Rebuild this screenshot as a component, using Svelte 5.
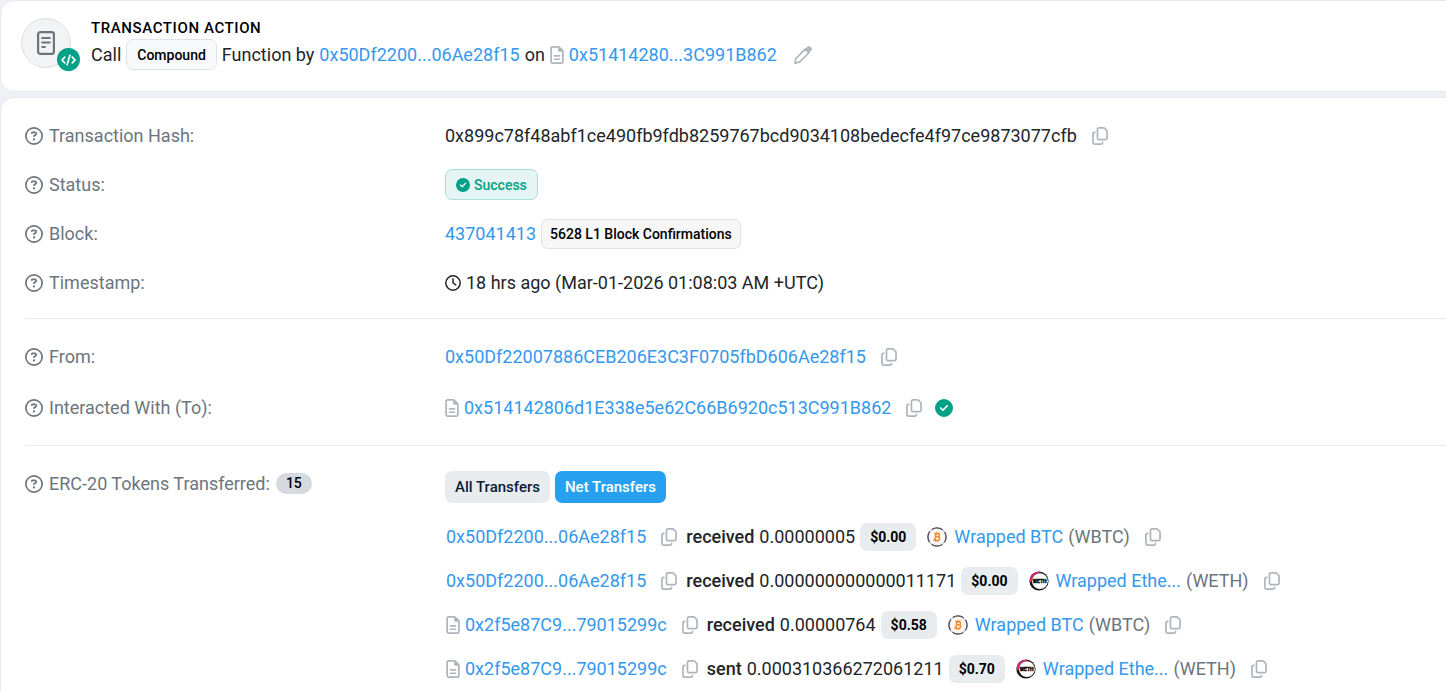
<script>
  const transfers = [
    { contract: false, address: '0x50Df2200...06Ae28f15', action: 'received', amount: '0.00000005', value: '$0.00', token: 'Wrapped BTC', symbol: 'WBTC' },
    { contract: false, address: '0x50Df2200...06Ae28f15', action: 'received', amount: '0.000000000000011171', value: '$0.00', token: 'Wrapped Ethe...', symbol: 'WETH' },
    { contract: true, address: '0x2f5e87C9...79015299c', action: 'received', amount: '0.00000764', value: '$0.58', token: 'Wrapped BTC', symbol: 'WBTC' },
    { contract: true, address: '0x2f5e87C9...79015299c', action: 'sent', amount: '0.000310366272061211', value: '$0.70', token: 'Wrapped Ethe...', symbol: 'WETH' }
  ];
</script>

{#snippet help()}
  <svg class="help" viewBox="0 0 512 512" aria-hidden="true"><path fill="currentColor" d="M464 256A208 208 0 1 0 48 256a208 208 0 1 0 416 0zM0 256a256 256 0 1 1 512 0A256 256 0 1 1 0 256zm169.8-90.7c7.9-22.3 29.1-37.3 52.8-37.3h58.3c34.9 0 63.1 28.3 63.1 63.1c0 22.6-12.1 43.5-31.7 54.8L280 264.4c-.2 13-10.9 23.6-24 23.6c-13.3 0-24-10.7-24-24V250.5c0-8.6 4.6-16.5 12.1-20.8l44.3-25.4c4.7-2.7 7.6-7.7 7.6-13.1c0-8.4-6.8-15.1-15.1-15.1H222.6c-3.4 0-6.4 2.1-7.5 5.3l-.4 1.2c-4.4 12.5-18.2 19-30.6 14.6s-19-18.2-14.6-30.6l.4-1.2zM224 352a32 32 0 1 1 64 0 32 32 0 1 1 -64 0z"/></svg>
{/snippet}

{#snippet file()}
  <svg class="file" viewBox="0 0 384 512" aria-hidden="true"><path fill="currentColor" d="M64 464c-8.8 0-16-7.2-16-16V64c0-8.8 7.2-16 16-16H224v80c0 17.7 14.3 32 32 32h80V448c0 8.8-7.2 16-16 16H64zM64 0C28.7 0 0 28.7 0 64V448c0 35.3 28.7 64 64 64H320c35.3 0 64-28.7 64-64V154.5c0-17-6.7-33.3-18.7-45.3L274.7 18.7C262.7 6.7 246.5 0 229.5 0H64zm56 256c-13.3 0-24 10.7-24 24s10.7 24 24 24H264c13.3 0 24-10.7 24-24s-10.7-24-24-24H120zm0 96c-13.3 0-24 10.7-24 24s10.7 24 24 24H264c13.3 0 24-10.7 24-24s-10.7-24-24-24H120z"/></svg>
{/snippet}

{#snippet copy()}
  <button class="icon-button" type="button" aria-label="Copy">
    <svg class="copy" viewBox="0 0 448 512" aria-hidden="true"><path fill="currentColor" d="M384 336H192c-8.8 0-16-7.2-16-16V64c0-8.8 7.2-16 16-16l140.1 0L400 115.9V320c0 8.8-7.2 16-16 16zM192 384H384c35.3 0 64-28.7 64-64V115.9c0-12.7-5.1-24.9-14.1-33.9L366.1 14.1c-9-9-21.2-14.1-33.9-14.1H192c-35.3 0-64 28.7-64 64V320c0 35.3 28.7 64 64 64zM64 128c-35.3 0-64 28.7-64 64V448c0 35.3 28.7 64 64 64H256c35.3 0 64-28.7 64-64V416H272v32c0 8.8-7.2 16-16 16H64c-8.8 0-16-7.2-16-16V192c0-8.8 7.2-16 16-16H96V128H64z"/></svg>
  </button>
{/snippet}

{#snippet check()}
  <svg class="check" viewBox="0 0 512 512" aria-hidden="true"><path fill="currentColor" d="M256 512A256 256 0 1 0 256 0a256 256 0 1 0 0 512zM369 209L241 337c-9.4 9.4-24.6 9.4-33.9 0l-64-64c-9.4-9.4-9.4-24.6 0-33.9s24.6-9.4 33.9 0l47 47L335 175c9.4-9.4 24.6-9.4 33.9 0s9.4 24.6 0 33.9z"/></svg>
{/snippet}

{#snippet coin(symbol)}
  {#if symbol === 'WBTC'}
    <svg class="coin" viewBox="0 0 20 20" aria-hidden="true">
      <circle cx="10" cy="10" r="9.1" fill="#fff" stroke="#aaa6ae" stroke-width="1"/>
      <circle cx="10" cy="10" r="9.1" fill="none" stroke="#544e5a" stroke-width="1.3" stroke-dasharray="11.3 3" stroke-dashoffset="5.6"/>
      <circle cx="10" cy="10" r="7.4" fill="none" stroke="#e4e3e6" stroke-width=".7"/>
      <g transform="rotate(8 10 10)" fill="none" stroke="#f4913c" stroke-width="1.7">
        <path d="M6.6 6.7h4.1c2 0 2 3.1 0 3.1H8.6M8.4 6.7v6.6M6.6 13.3h4.5c2.3 0 2.3-3.5 0-3.5"/>
        <path stroke-width="1.2" d="M9.2 4.8v1.6M11.2 4.8v1.6M9.2 13.6v1.6M11.2 13.6v1.6"/>
      </g>
    </svg>
  {:else}
    <svg class="coin" viewBox="0 0 20 20" aria-hidden="true">
      <circle cx="10" cy="10" r="9.6" fill="#151315"/>
      <path fill="#ec1c79" d="M.9 11A9.1 9.1 0 0 1 13 1.3C7 2 3 5 2.7 11z"/>
      <circle cx="10.9" cy="10.2" r="7.9" fill="#fff"/>
      <text x="10.7" y="11.9" text-anchor="middle" font-size="5" font-weight="900" font-family="Roboto, sans-serif" fill="#111" stroke="#111" stroke-width=".4">WETH</text>
    </svg>
  {/if}
{/snippet}

<main>
  <section class="card action">
    <div class="avatar">
      <svg class="memo" viewBox="0 0 18 24" aria-hidden="true">
        <rect x="1.1" y="1.1" width="15.8" height="21.8" rx="2.2" fill="none" stroke="currentColor" stroke-width="2.2"/>
        <path fill="none" stroke="currentColor" stroke-width="2" stroke-linecap="round" d="M5.2 7h7.6M5.2 11.5h7.6M5.2 16h2.8"/>
      </svg>
      <span class="code">
        <svg viewBox="0 0 16 12" aria-hidden="true"><path fill="none" stroke="#fff" stroke-width="1.8" stroke-linecap="round" stroke-linejoin="round" d="M4 3 1 6l3 3M12 3l3 3-3 3M9.5 1l-3 10"/></svg>
      </span>
    </div>
    <div>
      <h1>Transaction Action</h1>
      <div class="line">
        <span>Call</span>
        <span class="badge light">Compound</span>
        <span>Function by</span>
        <a href="#from">0x50Df2200...06Ae28f15</a>
        <span>on</span>
        {@render file()}
        <a href="#to">0x51414280...3C991B862</a>
        <button class="icon-button edit" type="button" aria-label="Edit note">
          <svg viewBox="0 0 18 18" aria-hidden="true">
            <path fill="none" stroke="currentColor" stroke-width="1.6" stroke-linejoin="round" d="M.9 17.1l1-4.6L11.5 2.9l3.6 3.6-9.6 9.6z"/>
            <path fill="currentColor" d="M10.6 3.4 13.4.7a2 2 0 0 1 2.8 0l1.1 1.1a2 2 0 0 1 0 2.8l-2.7 2.8z"/>
          </svg>
        </button>
      </div>
    </div>
  </section>

  <section class="card details">
    <dl>
      <div class="row">
        <dt>{@render help()}Transaction Hash:</dt>
        <dd><span>0x899c78f48abf1ce490fb9fdb8259767bcd9034108bedecfe4f97ce9873077cfb</span>{@render copy()}</dd>
      </div>
      <div class="row">
        <dt>{@render help()}Status:</dt>
        <dd><span class="badge success">{@render check()}Success</span></dd>
      </div>
      <div class="row">
        <dt>{@render help()}Block:</dt>
        <dd><a href="#block">437041413</a><span class="badge confirmations">5628 L1 Block Confirmations</span></dd>
      </div>
      <div class="row">
        <dt>{@render help()}Timestamp:</dt>
        <dd>
          <svg class="clock" viewBox="0 0 16 16" aria-hidden="true"><circle cx="8" cy="8" r="7.2" fill="none" stroke="currentColor" stroke-width="1.5"/><path fill="none" stroke="currentColor" stroke-width="1.5" stroke-linecap="round" stroke-linejoin="round" d="M8 3.8V8l2.8 1.9"/></svg>
          <span>18 hrs ago (Mar-01-2026 01:08:03 AM +UTC)</span>
        </dd>
      </div>
    </dl>
    <dl class="parties">
      <div class="row">
        <dt>{@render help()}From:</dt>
        <dd id="from"><a href="#from">0x50Df22007886CEB206E3C3F0705fbD606Ae28f15</a>{@render copy()}</dd>
      </div>
      <div class="row">
        <dt>{@render help()}Interacted With (To):</dt>
        <dd id="to">{@render file()}<a href="#to">0x514142806d1E338e5e62C66B6920c513C991B862</a>{@render copy()}<span class="verified">{@render check()}</span></dd>
      </div>
    </dl>
    <dl>
      <div class="row">
        <dt>{@render help()}ERC-20 Tokens Transferred:<span class="count">15</span></dt>
        <dd class="tokens">
          <div class="tabs">
            <button type="button">All Transfers</button>
            <button type="button" class="active">Net Transfers</button>
          </div>
          <ul>
            {#each transfers as t}
              <li>
                {#if t.contract}{@render file()}{/if}
                <a href="#address">{t.address}</a>
                {@render copy()}
                <strong>{t.action}</strong>
                <span>{t.amount}</span>
                <span class="value">{t.value}</span>
                {@render coin(t.symbol)}
                <a href="#token">{t.token}</a>
                <span class="symbol">({t.symbol})</span>
                {@render copy()}
              </li>
            {/each}
          </ul>
        </dd>
      </div>
    </dl>
  </section>
</main>

<style>
  :global(body) {
    background: #f0f1f6;
    overflow: hidden;
  }
  main {
    font: 18px/24px Roboto, sans-serif;
    color: #212529;
    white-space: nowrap;
  }
  .card {
    background: #fff;
    border: 1px solid #e6e9ee;
    border-right: 0;
    border-radius: 14px 0 0 14px;
  }
  .action {
    display: flex;
    gap: 20px;
    padding: 17px 20px 21px;
    margin-bottom: 5px;
  }
  .avatar {
    position: relative;
    box-sizing: border-box;
    display: grid;
    place-items: center;
    width: 50px;
    height: 50px;
    border: 1px solid #dcdfe2;
    border-radius: 50%;
    background: #f1f3f5;
    color: #6c757d;
  }
  .memo {
    width: 18px;
    height: 24px;
  }
  .code {
    position: absolute;
    right: -10px;
    bottom: -4px;
    display: grid;
    place-items: center;
    width: 23px;
    height: 23px;
    border-radius: 50%;
    background: #00a186;
  }
  .code svg {
    width: 15px;
    height: 12px;
  }
  h1 {
    margin: 0;
    font-size: 15px;
    line-height: 21px;
    font-weight: 500;
    letter-spacing: 0.04em;
    text-transform: uppercase;
    color: #000;
  }
  svg {
    display: block;
    flex: none;
  }
  a {
    color: #3498ee;
    text-decoration: none;
  }
  .line,
  dt,
  dd,
  li {
    display: flex;
    align-items: center;
    gap: 5px;
  }
  .badge {
    box-sizing: border-box;
    display: flex;
    align-items: center;
    gap: 4px;
    height: 31px;
    padding: 0 10px;
    border: 1px solid #dee2e6;
    border-radius: 7px;
    font-size: 14px;
    font-weight: 500;
    color: #000;
  }
  .light {
    background: #f8f9fa;
  }
  .confirmations {
    height: 30px;
    padding: 0 8px;
    background: #f7f7f8;
  }
  .success {
    background: #e5f5f3;
    border-color: #a9dfd5;
    color: #00a186;
  }
  .help,
  .verified .check {
    width: 18px;
    height: 18px;
  }
  .check {
    width: 14px;
    height: 14px;
  }
  .verified {
    margin-left: 4px;
    color: #00a186;
  }
  .file {
    width: 14px;
    height: 18px;
    color: #adb5bd;
  }
  .clock {
    width: 16px;
    height: 16px;
  }
  .copy {
    width: 16px;
    height: 18px;
  }
  .icon-button {
    margin: 0 4px 0 10px;
    padding: 0;
    border: 0;
    background: none;
    color: #adb5bd;
    cursor: pointer;
  }
  .edit {
    margin-left: 12px;
  }
  .edit svg {
    width: 18px;
    height: 18px;
  }
  .details {
    padding: 22px 0 0 24px;
  }
  dl {
    display: grid;
    gap: 18px;
    margin: 0;
    padding-bottom: 20px;
  }
  dl + dl {
    padding-top: 22px;
    border-top: 1px solid #e9ecef;
  }
  .parties {
    gap: 20px;
    padding-bottom: 22px;
  }
  .row {
    display: grid;
    grid-template-columns: 420px 1fr;
    min-height: 31px;
  }
  dt {
    gap: 6px;
    height: 31px;
    color: #6c757d;
  }
  dd {
    margin: 0;
  }
  .count {
    padding: 0 10px;
    border-radius: 11px;
    background: #d5dae0;
    font-size: 14px;
    line-height: 21px;
    font-weight: 500;
    color: #000;
  }
  .tokens {
    flex-direction: column;
    align-items: flex-start;
    gap: 20px;
    padding-top: 3px;
  }
  .tabs {
    display: flex;
    gap: 5px;
  }
  .tabs button {
    height: 32px;
    padding: 0 10px;
    border: 0;
    border-radius: 7px;
    background: #e9ecef;
    font: 500 15px Roboto, sans-serif;
    color: #081d35;
  }
  .tabs .active {
    background: #28a0f0;
    color: #fff;
  }
  ul {
    display: grid;
    gap: 16px;
    margin: 0;
    padding: 0 0 0 1px;
    list-style: none;
  }
  strong {
    font-weight: 500;
  }
  .value {
    padding: 0 10px;
    border-radius: 7px;
    background: #e9ecef;
    font-size: 14px;
    line-height: 28px;
    font-weight: 700;
    color: #000;
  }
  .coin {
    width: 20px;
    height: 20px;
    margin: 0 2px 0 6px;
  }
  .symbol {
    color: #6c757d;
  }
</style>
